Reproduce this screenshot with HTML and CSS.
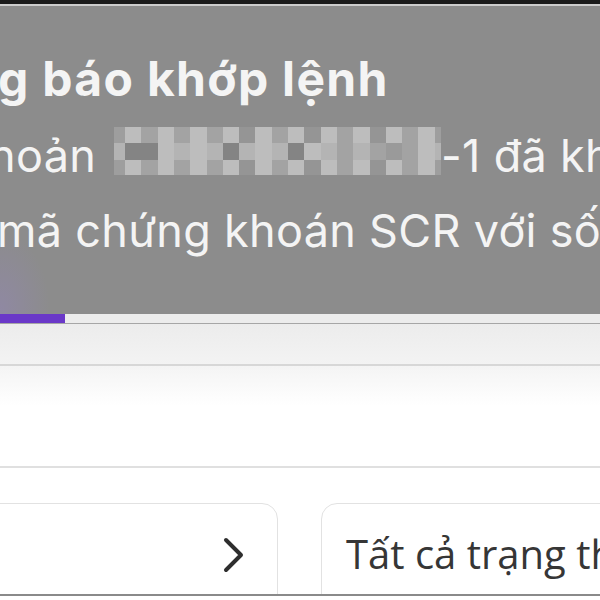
FILE: index.html
```html
<!DOCTYPE html>
<html lang="vi">
<head>
<meta charset="utf-8">
<title>Thông báo khớp lệnh</title>
<link rel="stylesheet" href="styles.css">
</head>
<body>
<div class="screen">
  <div class="topbar"></div>
  <div class="toast">
    <div class="toast-title">g báo khớp lệnh</div>
    <div class="toast-line line2">
      <span class="clip-h">hoản</span>
      <span class="mosaic" aria-hidden="true">
        <i class="p1"></i><i class="l"></i><i class="m"></i><i class="l"></i><i class="m"></i><i class="l"></i><i class="m"></i><i class="l"></i><i class="b"></i><i class="l"></i><i class="m"></i><i class="l"></i><i class="b"></i><i class="l"></i><i class="m"></i><i class="l"></i><i class="b"></i><i class="l"></i><i class="m"></i><i class="l"></i><i class="p1"></i>
        <i class="l2"></i><i class="d"></i><i class="d"></i><i class="l"></i><i class="l2"></i><i class="l"></i><i class="l2"></i><i class="d"></i><i class="l2"></i><i class="l"></i><i class="l2"></i><i class="d"></i><i class="l"></i><i class="l2"></i><i class="m"></i><i class="l2"></i><i class="m"></i><i class="m2"></i><i class="m"></i><i class="l"></i><i class="l2"></i>
        <i class="p1"></i><i class="l"></i><i class="m"></i><i class="l"></i><i class="m"></i><i class="l"></i><i class="m"></i><i class="l"></i><i class="b"></i><i class="l"></i><i class="m"></i><i class="l"></i><i class="b"></i><i class="l"></i><i class="m"></i><i class="l"></i><i class="b"></i><i class="l"></i><i class="m"></i><i class="l"></i><i class="p1"></i>
      </span>
      <span>-1 đã khớp</span>
    </div>
    <div class="toast-line line3">mã chứng khoán SCR với số</div>
  </div>
  <div class="progress"><div class="progress-fill"></div></div>
  <div class="band"></div>
  <div class="section"></div>
  <div class="filters">
    <div class="card card-left">
      <svg class="chevron" width="22" height="36" viewBox="0 0 22 36"><path d="M3 3 L18 18 L3 33" fill="none" stroke="#2e2e2e" stroke-width="4" stroke-linecap="round" stroke-linejoin="round"/></svg>
    </div>
    <div class="card card-right">
      <span class="card-label">Tất cả trạng thái</span>
    </div>
  </div>
</div>
</body>
</html>
```
FILE: styles.css
```css
html, body {
  margin: 0;
  padding: 0;
  background: #ffffff;
}
.screen {
  width: 600px;
  height: 600px;
  overflow: hidden;
  display: flex;
  flex-direction: column;
}
.topbar {
  height: 4px;
  flex: none;
  background: #1b1b1b;
  border-bottom: 2px solid #cdcdcd;
}
.toast {
  flex: none;
  height: 308px;
  box-sizing: border-box;
  background: radial-gradient(ellipse 50px 80px at 0 305px, rgba(150, 130, 205, 0.35), rgba(150, 130, 205, 0) 100%), #8c8c8c;
  color: #f4f4f4;
  font-family: "Inter", "Noto Sans", sans-serif;
  padding-top: 48px;
  overflow: hidden;
  white-space: nowrap;
}
.toast-title {
  font-size: 48px;
  font-weight: 700;
  letter-spacing: 1.3px;
  line-height: 50px;
  margin-left: -2px;
}
.toast-line {
  font-size: 45px;
  font-weight: 400;
  letter-spacing: 0.3px;
  line-height: 50px;
  display: flex;
  align-items: flex-start;
}
.line2 {
  margin-top: 27px;
  margin-left: -11px;
}
.line3 {
  margin-top: 25px;
  margin-left: -3px;
}
.mosaic {
  display: grid;
  grid-template-columns: 11px repeat(19, 16.3px) 6px;
  grid-template-rows: 16px 17px 15px;
  width: 323px;
  flex: none;
  margin: -4px 4px 0 18px;
}
.mosaic i { display: block; }
.mosaic .l { background: #bdbdbd; }
.mosaic .l2 { background: #b4b4b4; }
.mosaic .m { background: #a3a3a3; }
.mosaic .m2 { background: #9a9a9a; }
.mosaic .b { background: #959595; }
.mosaic .d { background: #848484; }
.mosaic .p1 { background: #9e9e9e; }
.progress {
  flex: none;
  height: 9px;
  background: #ececec;
  border-bottom: 1px solid #a6a6a6;
}
.progress-fill {
  width: 65px;
  height: 100%;
  background: #6a38c8;
}
.band {
  flex: none;
  height: 40px;
  background: linear-gradient(#ececec, #f3f3f3);
  border-bottom: 2px solid #d7d7d7;
}
.section {
  flex: none;
  height: 100px;
  background: linear-gradient(#f4f4f4, #ffffff 40px);
  border-bottom: 2px solid #e0e0e0;
}
.filters {
  flex: none;
  height: 128px;
  box-sizing: border-box;
  padding-top: 35px;
  display: flex;
  gap: 43px;
  margin-left: -30px;
  border-bottom: 2px solid #8a8a8a;
  overflow: hidden;
}
.card {
  flex: none;
  height: 120px;
  box-sizing: border-box;
  border: 1.5px solid #e2e2e2;
  border-radius: 16px;
  display: flex;
}
.card-left {
  width: 308px;
  justify-content: flex-end;
  padding-right: 32px;
  align-items: flex-start;
  padding-top: 33px;
}
.card-right {
  width: 320px;
  padding-left: 24px;
  align-items: flex-start;
  padding-top: 23px;
}
.card-label {
  font-family: "Open Sans", "Noto Sans", sans-serif;
  font-size: 40px;
  color: #363636;
  white-space: nowrap;
  line-height: 54px;
}
```
